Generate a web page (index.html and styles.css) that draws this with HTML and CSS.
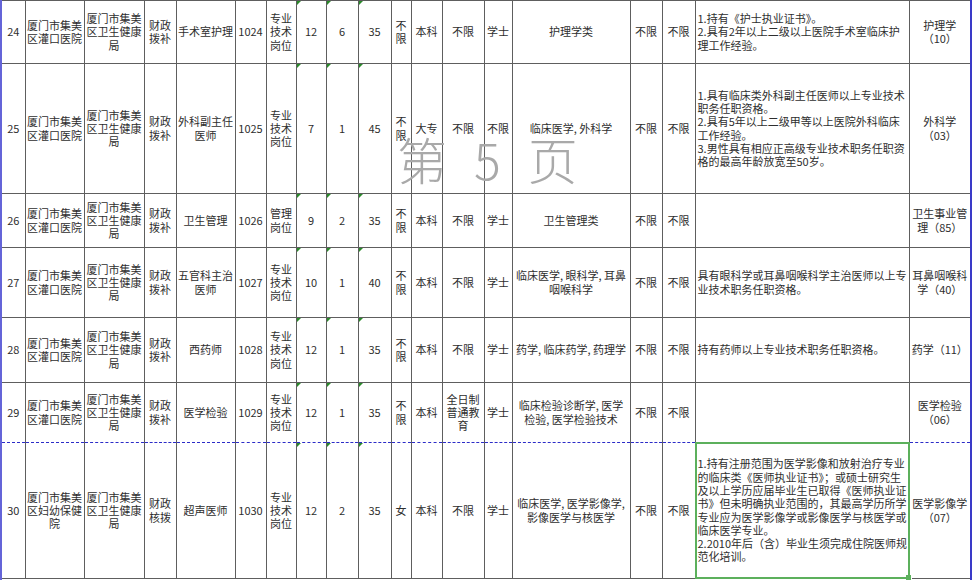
FILE: index.html
```html
<!DOCTYPE html>
<html lang="zh-CN">
<head>
<meta charset="utf-8">
<title>第5页</title>
<link rel="stylesheet" href="styles.css">
</head>
<body>
<div class="sheet">
<table class="grid">
<colgroup>
<col class="w23"><col class="w59"><col class="w60"><col class="w32"><col class="w59"><col class="w31"><col class="w30"><col class="w30"><col class="w32"><col class="w33"><col class="w20"><col class="w31"><col class="w42"><col class="w28"><col class="w118"><col class="w32"><col class="w33"><col class="w214"><col class="w61">
</colgroup>
<tbody>
<tr class="r24">
<td>24</td><td>厦门市集美<br>区灌口医院</td><td>厦门市集美<br>区卫生健康<br>局</td><td>财政<br>拨补</td><td>手术室护理</td><td>1024</td><td>专业<br>技术<br>岗位</td><td class="tri">12</td><td class="tri">6</td><td class="tri">35</td><td>不<br>限</td><td>本科</td><td>不限</td><td>学士</td><td>护理学类</td><td>不限</td><td>不限</td><td class="cond">1.持有《护士执业证书》。<br>2.具有2年以上二级以上医院手术室临床护<br>理工作经验。</td><td>护理学<br>（10）</td>
</tr>
<tr class="r25">
<td>25</td><td>厦门市集美<br>区灌口医院</td><td>厦门市集美<br>区卫生健康<br>局</td><td>财政<br>拨补</td><td>外科副主任<br>医师</td><td>1025</td><td>专业<br>技术<br>岗位</td><td class="tri">7</td><td class="tri">1</td><td class="tri">45</td><td>不<br>限</td><td>大专</td><td>不限</td><td>不限</td><td>临床医学, 外科学</td><td>不限</td><td>不限</td><td class="cond">1.具有临床类外科副主任医师以上专业技术<br>职务任职资格。<br>2.具有5年以上二级甲等以上医院外科临床<br>工作经验。<br>3.男性具有相应正高级专业技术职务任职资<br>格的最高年龄放宽至50岁。</td><td>外科学<br>（03）</td>
</tr>
<tr class="r26">
<td>26</td><td>厦门市集美<br>区灌口医院</td><td>厦门市集美<br>区卫生健康<br>局</td><td>财政<br>拨补</td><td>卫生管理</td><td>1026</td><td>管理<br>岗位</td><td class="tri">9</td><td class="tri">2</td><td class="tri">35</td><td>不<br>限</td><td>本科</td><td>不限</td><td>学士</td><td>卫生管理类</td><td>不限</td><td>不限</td><td class="cond"></td><td>卫生事业管<br>理（85）</td>
</tr>
<tr class="r27">
<td>27</td><td>厦门市集美<br>区灌口医院</td><td>厦门市集美<br>区卫生健康<br>局</td><td>财政<br>拨补</td><td>五官科主治<br>医师</td><td>1027</td><td>专业<br>技术<br>岗位</td><td class="tri">10</td><td class="tri">1</td><td class="tri">40</td><td>不<br>限</td><td>本科</td><td>不限</td><td>学士</td><td>临床医学, 眼科学, 耳鼻<br>咽喉科学</td><td>不限</td><td>不限</td><td class="cond">具有眼科学或耳鼻咽喉科学主治医师以上专<br>业技术职务任职资格。</td><td>耳鼻咽喉科<br>学（40）</td>
</tr>
<tr class="r28">
<td>28</td><td>厦门市集美<br>区灌口医院</td><td>厦门市集美<br>区卫生健康<br>局</td><td>财政<br>拨补</td><td>西药师</td><td>1028</td><td>专业<br>技术<br>岗位</td><td class="tri">12</td><td class="tri">1</td><td class="tri">35</td><td>不<br>限</td><td>本科</td><td>不限</td><td>学士</td><td>药学, 临床药学, 药理学</td><td>不限</td><td>不限</td><td class="cond">持有药师以上专业技术职务任职资格。</td><td>药学（11）</td>
</tr>
<tr class="r29">
<td>29</td><td>厦门市集美<br>区灌口医院</td><td>厦门市集美<br>区卫生健康<br>局</td><td>财政<br>拨补</td><td>医学检验</td><td>1029</td><td>专业<br>技术<br>岗位</td><td class="tri">12</td><td class="tri">1</td><td class="tri">35</td><td>不<br>限</td><td>本科</td><td>全日制<br>普通教<br>育</td><td>学士</td><td>临床检验诊断学, 医学<br>检验, 医学检验技术</td><td>不限</td><td>不限</td><td class="cond"></td><td>医学检验<br>（06）</td>
</tr>
<tr class="r30">
<td>30</td><td>厦门市集美<br>区妇幼保健<br>院</td><td>厦门市集美<br>区卫生健康<br>局</td><td>财政<br>核拨</td><td>超声医师</td><td>1030</td><td>专业<br>技术<br>岗位</td><td class="tri">12</td><td class="tri">2</td><td class="tri">35</td><td>女</td><td>本科</td><td>不限</td><td>学士</td><td>临床医学, 医学影像学,<br>影像医学与核医学</td><td>不限</td><td>不限</td><td class="cond sel">1.持有注册范围为医学影像和放射治疗专业<br>的临床类《医师执业证书》；或硕士研究生<br>及以上学历应届毕业生已取得《医师执业证<br>书》但未明确执业范围的，其最高学历所学<br>专业应为医学影像学或影像医学与核医学或<br>临床医学专业。<br>2.2010年后（含）毕业生须完成住院医师规<br>范化培训。</td><td>医学影像学<br>（07）</td>
</tr>
</tbody>
</table>
<div class="watermark"><span>第</span><span>5</span><span>页</span></div>
</div>
</body>
</html>
```
FILE: styles.css
```css
* { box-sizing: border-box; }
html, body { margin: 0; padding: 0; background: #ffffff; }
body { font-family: "Noto Sans CJK SC", "Noto Sans", sans-serif; overflow: hidden; }

.sheet {
  position: relative;
  width: 972px;
  height: 580px;
  border-left: 2px solid #6464d8;
  border-right: 2px solid #3a3ac8;
}

.grid {
  border-collapse: collapse;
  table-layout: fixed;
  width: 968px;
}

.w20 { width: 20px; } .w23 { width: 23px; } .w28 { width: 28px; }
.w30 { width: 30px; } .w31 { width: 31px; } .w32 { width: 32px; }
.w33 { width: 33px; } .w42 { width: 42px; } .w59 { width: 59px; }
.w60 { width: 60px; } .w61 { width: 61px; } .w118 { width: 118px; }
.w214 { width: 214px; }

.grid td {
  border: 1px solid #5e5e5e;
  padding: 0 1px;
  font-size: 11px;
  line-height: 13.3px;
  color: #2e2e2e;
  text-align: center;
  vertical-align: middle;
  white-space: nowrap;
  overflow: hidden;
  position: relative;
}
.grid td:first-child { border-left: none; }
.grid td:last-child { border-right: none; }

.grid td.cond { text-align: left; padding-left: 2px; padding-right: 0; }

.r24 { height: 63px; }
.r25 { height: 130px; }
.r26 { height: 54px; }
.r27 { height: 70px; }
.r28 { height: 65px; }
.r29 { height: 60px; }
.r30 { height: 136px; }

.r29 td { border-bottom: 1px dashed #2c2cc8; }
.r30 td { border-top: 1px dashed #2c2cc8; }

.grid td.tri::before {
  content: "";
  position: absolute;
  left: 0;
  top: 0;
  width: 0;
  height: 0;
  border-top: 4px solid #2b8a2b;
  border-right: 4px solid transparent;
}

.grid td.sel { overflow: visible; }
.grid td.sel::after {
  content: "";
  position: absolute;
  left: -1px;
  top: -1px;
  right: -1px;
  bottom: -1px;
  border: 2px solid #5cb05c;
  pointer-events: none;
}
.grid td.sel::before {
  content: "";
  position: absolute;
  right: -3px;
  bottom: -3px;
  width: 5px;
  height: 5px;
  background: #5cb05c;
  border: 1px solid #ffffff;
}

.watermark {
  position: absolute;
  left: 395px;
  top: 133px;
  display: flex;
  gap: 27px;
  font-size: 50px;
  line-height: 50px;
  font-weight: 300;
  color: #a9a9a9;
  pointer-events: none;
}
```
